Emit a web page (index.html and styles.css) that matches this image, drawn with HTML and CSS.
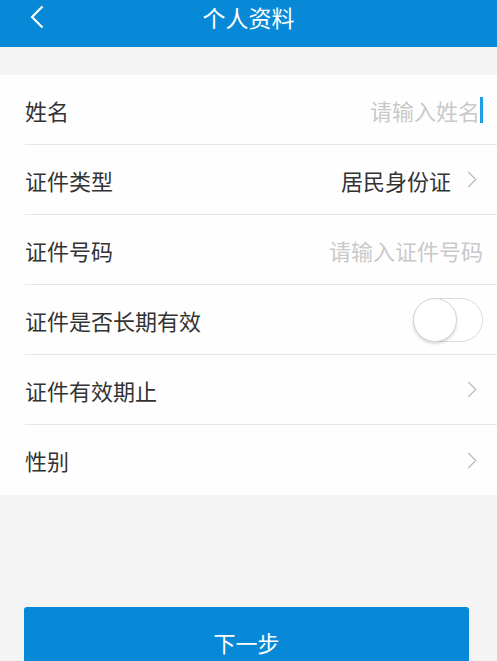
FILE: index.html
```html
<!DOCTYPE html>
<html lang="zh-CN">
<head>
  <meta charset="UTF-8" />
  <title>个人资料</title>
  <link rel="stylesheet" href="styles.css">
</head>
<body>
  <header class="topbar">
    <button class="back" aria-label="返回">
      <svg viewBox="0 0 14 24" xmlns="http://www.w3.org/2000/svg">
        <path d="M12.5 1.5 L2 12 L12.5 22.5" />
      </svg>
    </button>
    <h1>个人资料</h1>
  </header>

  <div class="spacer"></div>

  <ul class="form-list">
    <li class="row">
      <span class="label">姓名</span>
      <span class="field">
        <span class="placeholder">请输入姓名</span><span class="caret"></span>
      </span>
    </li>
    <li class="row">
      <span class="label">证件类型</span>
      <span class="field">
        <span class="value">居民身份证</span>
        <svg class="arrow" viewBox="0 0 10 18" xmlns="http://www.w3.org/2000/svg"><path d="M1 1 L9 9 L1 17" /></svg>
      </span>
    </li>
    <li class="row">
      <span class="label">证件号码</span>
      <span class="field">
        <span class="placeholder">请输入证件号码</span>
      </span>
    </li>
    <li class="row">
      <span class="label">证件是否长期有效</span>
      <span class="field">
        <span class="switch"><span class="knob"></span></span>
      </span>
    </li>
    <li class="row">
      <span class="label">证件有效期止</span>
      <span class="field">
        <svg class="arrow" viewBox="0 0 10 18" xmlns="http://www.w3.org/2000/svg"><path d="M1 1 L9 9 L1 17" /></svg>
      </span>
    </li>
    <li class="row">
      <span class="label">性别</span>
      <span class="field">
        <svg class="arrow" viewBox="0 0 10 18" xmlns="http://www.w3.org/2000/svg"><path d="M1 1 L9 9 L1 17" /></svg>
      </span>
    </li>
  </ul>

  <div class="actions">
    <button class="next">下一步</button>
  </div>
</body>
</html>
```

FILE: styles.css
```css
:root {
  --blue: #0889d8;
  --bg: #f4f4f4;
  --card: #fefefe;
  --text: #333;
  --hint: #c9c9c9;
  --line: #e6e6e6;
}

html, body {
  margin: 0;
  height: 100%;
  overflow: hidden;
}

body {
  font-family: "Noto Sans CJK SC", "Noto Sans", sans-serif;
  background-color: var(--bg);
  color: var(--text);
}

.topbar {
  position: relative;
  height: 34px;
  padding-bottom: 13px;
  background-color: var(--blue);
  display: flex;
  align-items: center;
  justify-content: center;
}

.topbar h1 {
  margin: 0;
  font-size: 23px;
  font-weight: 400;
  color: #fff;
  line-height: 34px;
}

.back {
  position: absolute;
  left: 29px;
  top: 4px;
  width: 16px;
  height: 25px;
  padding: 0;
  background: none;
  border: none;
  display: flex;
  align-items: center;
  justify-content: center;
}

.back svg {
  width: 14px;
  height: 24px;
  fill: none;
  stroke: #fff;
  stroke-width: 2.2;
}

.spacer {
  height: 28px;
}

.form-list {
  list-style: none;
  margin: 0;
  padding: 0 0 0 25px;
  background-color: var(--card);
}

.row {
  height: 69px;
  padding-right: 14px;
  border-bottom: 1px solid var(--line);
  display: flex;
  align-items: center;
  justify-content: space-between;
  font-size: 22px;
}

.row:last-child {
  border-bottom: none;
  height: 70px;
}

.field {
  display: flex;
  align-items: center;
}

.placeholder {
  color: var(--hint);
}

.caret {
  width: 3px;
  height: 26px;
  background-color: #1b9ee6;
}

.value {
  color: var(--text);
}

.arrow {
  width: 10px;
  height: 17px;
  margin-left: 16px;
  margin-right: 6px;
  fill: none;
  stroke: #bbb;
  stroke-width: 1.3;
}

.switch {
  position: relative;
  width: 68px;
  height: 42px;
  border: 1px solid #dcdcdc;
  border-radius: 22px;
  background-color: #fff;
}

.knob {
  position: absolute;
  left: -1px;
  top: -1px;
  width: 42px;
  height: 42px;
  border-radius: 50%;
  background-color: #fff;
  border: 1px solid #d6d6d6;
  box-shadow: 0 2px 3px rgba(0, 0, 0, 0.14);
}

.actions {
  padding: 112px 28px 0 24px;
}

.next {
  width: 100%;
  height: 70px;
  padding: 0;
  border: none;
  border-radius: 3px;
  background-color: var(--blue);
  color: #fff;
  font-family: inherit;
  font-size: 22px;
}
```
